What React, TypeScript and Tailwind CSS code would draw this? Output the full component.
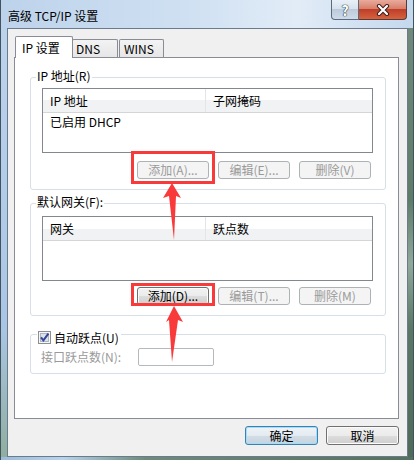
import React from 'react';

type BtnProps = { label: string; disabled?: boolean; primary?: boolean; w?: string; h?: string };

const Btn: React.FC<BtnProps> = ({ label, disabled, primary, w = 'w-[72px]', h = 'h-[18px]' }) => {
  let look =
    'border-[#707070] text-black bg-[linear-gradient(#f2f2f2_0%,#ebebeb_50%,#dddddd_50%,#cfcfcf_100%)] shadow-[inset_0_0_0_1px_#fbfbfb]';
  if (disabled) look = 'border-[#adb2b5] text-[#9a9a9a] bg-[#f4f4f4]';
  if (primary)
    look =
      'border-[#3c7fb1] text-black bg-[linear-gradient(#eef3f7_0%,#e3ebf1_50%,#d3dde6_50%,#c7d3de_100%)] shadow-[inset_0_0_0_1px_#9ee0fb]';
  return (
    <div className={`${w} ${h} border rounded-[3px] flex items-center justify-center leading-none ${look}`}>
      {label}
    </div>
  );
};

const ListView: React.FC<{ cols: [string, string]; rows?: string[] }> = ({ cols, rows = [] }) => (
  <div className="w-[331px] h-[65px] border border-[#828790] bg-white flex flex-col">
    <div className="h-[24px] flex border-b border-[#d5d5d5] bg-[linear-gradient(#ffffff_0%,#ffffff_50%,#f1f2f4_50%,#f1f2f4_100%)]">
      <div className="w-[163px] border-r border-[#e3e5e8] pl-[7px] flex items-center">{cols[0]}</div>
      <div className="flex-1 pl-[7px] flex items-center">{cols[1]}</div>
    </div>
    {rows.map((r) => (
      <div key={r} className="h-[18px] pl-[7px] flex items-center">
        {r}
      </div>
    ))}
  </div>
);

const GroupBox: React.FC<{ label: string; children: React.ReactNode; className?: string }> = ({
  label,
  children,
  className = '',
}) => (
  <div className={`relative w-[356px] border border-[#d5dfe5] rounded-[3px] shadow-[inset_0_0_0_1px_#ffffff] ${className}`}>
    <div className="absolute left-[5px] top-[-9px] bg-white px-[1px] leading-[14px]">{label}</div>
    {children}
  </div>
);

export default function App() {
  return (
    <div className="relative w-[414px] h-[460px] overflow-hidden flex flex-col border-l border-r border-[#43525f] bg-[#b4cce8] font-['Noto_Sans_CJK_SC','Noto_Sans',sans-serif] text-[12px] text-black select-none">
      {/* title bar */}
      <div className="h-[28px] flex items-start bg-[linear-gradient(90deg,#bdd3eb_0%,#cfe0f2_45%,#e2ecf7_72%,#c4d8ee_100%)]">
        <div className="pl-[7px] pt-[8px] text-[12px] leading-[16px] text-black">高级 TCP/IP 设置</div>
        <div className="ml-auto mr-[6px] flex h-[20px]">
          <div className="w-[28px] h-[20px] border border-t-0 border-[#5b6b7c] rounded-bl-[4px] bg-[linear-gradient(#e9f0f7_0%,#d7e2ed_45%,#bccbdb_50%,#cfdbe8_100%)] flex items-center justify-center">
            <span className="text-white font-bold text-[14px] leading-none [text-shadow:0_0_1px_#2a3a4a,0_0_1px_#2a3a4a,0_0_1px_#2a3a4a]">?</span>
          </div>
          <div className="w-[48px] h-[20px] border border-t-0 border-l-0 border-[#5a3a33] rounded-br-[4px] bg-[linear-gradient(#e9ab9c_0%,#d8806b_45%,#bf3f28_50%,#d6623f_100%)] flex items-center justify-center">
            <svg width="14" height="12" viewBox="0 0 14 12">
              <path d="M3 2 L11 10 M11 2 L3 10" stroke="#3d1f1a" strokeWidth="4.2" strokeLinecap="round" />
              <path d="M3 2 L11 10 M11 2 L3 10" stroke="#ffffff" strokeWidth="2.2" strokeLinecap="round" />
            </svg>
          </div>
        </div>
      </div>

      {/* body row */}
      <div className="flex h-[429px]">
        <div className="w-[6px] bg-[linear-gradient(#bcd3ec_0%,#aac5e4_70%,#8fae9f_100%)]" />
        <div className="w-[401px] h-[429px] border border-[#6b7b8c] bg-[#f0f0f0] flex flex-col pt-[7px] pl-[6px]">
          {/* tabs */}
          <div className="flex items-end h-[21px]">
            <div className="relative z-10 -mb-px ml-[1px] w-[58px] h-[22px] border border-b-0 border-[#898c95] rounded-t-[2px] bg-white pl-[6px] flex items-center">
              IP 设置
            </div>
            <div className="-ml-px w-[46px] h-[18px] border border-b-0 border-[#898c95] rounded-t-[2px] bg-[linear-gradient(#f3f3f3,#e6e6e6)] pl-[3px] flex items-center">
              DNS
            </div>
            <div className="ml-[1px] w-[45px] h-[18px] border border-b-0 border-[#898c95] rounded-t-[2px] bg-[linear-gradient(#f3f3f3,#e6e6e6)] pl-[4px] flex items-center">
              WINS
            </div>
          </div>

          {/* tab page */}
          <div className="w-[385px] h-[362px] border border-[#898c95] bg-white flex flex-col pt-[19px] pl-[15px]">
            <GroupBox label="IP 地址(R)" className="h-[113px]">
              <div className="ml-[11px] mt-[10px]">
                <ListView cols={['IP 地址', '子网掩码']} rows={['已启用 DHCP']} />
              </div>
              <div className="mt-[8px] pr-[14px] flex justify-end gap-[9px]">
                <Btn label="添加(A)..." disabled />
                <Btn label="编辑(E)..." disabled />
                <Btn label="删除(V)" disabled />
              </div>
            </GroupBox>

            <GroupBox label="默认网关(F):" className="h-[113px] mt-[13px]">
              <div className="ml-[11px] mt-[12px]">
                <ListView cols={['网关', '跃点数']} />
              </div>
              <div className="mt-[6px] pr-[14px] flex justify-end gap-[9px]">
                <Btn label="添加(D)..." />
                <Btn label="编辑(T)..." disabled />
                <Btn label="删除(M)" disabled />
              </div>
            </GroupBox>

            <div className="relative w-[356px] h-[40px] mt-[18px] border border-[#d5dfe5] rounded-[3px]">
              <div className="absolute left-[6px] top-[-4px] h-[13px] bg-white pl-[1px] pr-[2px] flex items-center">
                <svg width="13" height="13" viewBox="0 0 13 13">
                  <rect x="0.5" y="0.5" width="12" height="12" fill="#f6f6f6" stroke="#8e8f8f" />
                  <rect x="2.5" y="2.5" width="8" height="8" fill="#dde2ea" stroke="#aeb6c2" />
                  <path d="M3 6.3 L5.4 9.4 L10.4 2.6" fill="none" stroke="#33479a" strokeWidth="2" />
                </svg>
                <span className="ml-[3px] leading-[13px]">自动跃点(U)</span>
              </div>
              <div className="mt-[13px] pl-[10px] flex items-center">
                <span className="w-[97px] text-[#9a9a9a] leading-[18px]">接口跃点数(N):</span>
                <div className="w-[76px] h-[18px] border border-[#b5b9be] rounded-[2px] bg-white" />
              </div>
            </div>
          </div>

          {/* dialog buttons */}
          <div className="w-[385px] mt-[7px] flex justify-end gap-[8px]">
            <Btn label="确定" primary w="w-[73px]" h="h-[19px]" />
            <Btn label="取消" w="w-[73px]" h="h-[19px]" />
          </div>
        </div>
        <div className="w-[5px] bg-[linear-gradient(#6f8a7c_0%,#5d7c68_40%,#8fa99b_55%,#5a7865_70%,#4f6b59_100%)]" />
      </div>

      {/* bottom frame */}
      <div className="h-[3px] bg-[linear-gradient(90deg,#9dbbd9_0%,#b8d3ec_15%,#6e8b7a_35%,#55725f_100%)]" />

      {/* red annotations */}
      <svg className="absolute left-0 top-0 pointer-events-none" width="414" height="460" viewBox="0 0 414 460">
        <rect x="131.5" y="152.5" width="81" height="30" fill="none" stroke="#f93a3a" strokeWidth="3" />
        <rect x="131.5" y="284.5" width="81" height="20" fill="none" stroke="#f93a3a" strokeWidth="3" />
        <polygon points="171,183 180,198 175,196 173,240 168,196 162,198" fill="#f93a3a" />
        <polygon points="173,306 182,322 177,320 171,362 168,320 165,322" fill="#f93a3a" />
      </svg>
    </div>
  );
}
